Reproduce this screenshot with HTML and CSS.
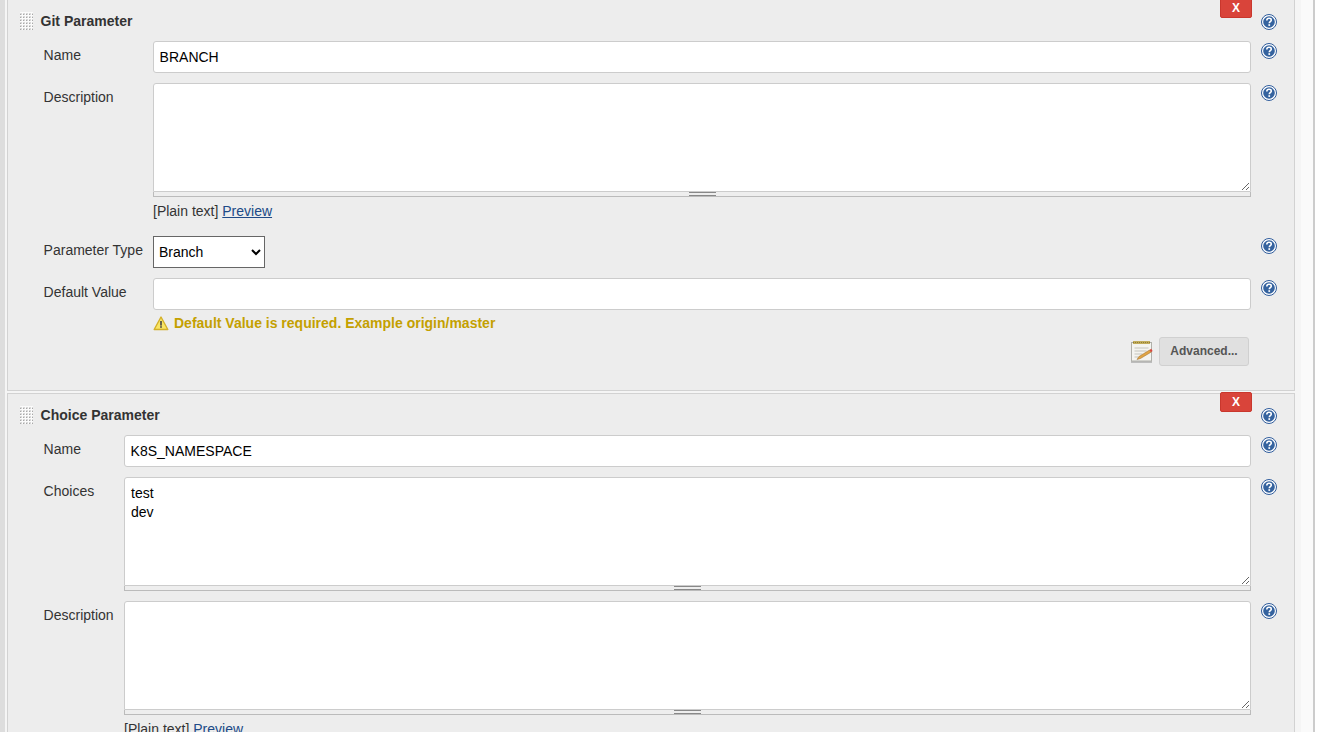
FILE: index.html
```html
<!DOCTYPE html>
<html lang="en">
<head>
    <meta charset="UTF-8">
    <title>Configure</title>
    <link rel="stylesheet" href="styles.css">
</head>

<body>
    <svg class="defs" width="0" height="0">
        <defs>
            <pattern id="dots" width="3" height="3" patternUnits="userSpaceOnUse">
                <rect width="2" height="2" y="1" fill="#d8d8d8"/>
                <rect width="1" height="1" y="2" fill="#a8a8a8"/>
            </pattern>
        </defs>
        <symbol id="help" viewBox="0 0 16 16">
            <circle cx="8" cy="8" r="7.5" fill="#fff" stroke="#2f5c9c"/>
            <circle cx="8" cy="8" r="5.8" fill="#35639f"/>
            <path d="M5.8 6.4c0-1.4 1-2.2 2.3-2.2s2.2.8 2.2 1.9c0 1.6-2 1.6-2 3.1" fill="none" stroke="#fff" stroke-width="1.6"/>
            <rect x="7.4" y="10.2" width="1.7" height="1.7" fill="#fff"/>
        </symbol>
        <symbol id="handle" viewBox="0 0 13 18">
            <rect width="13" height="18" fill="#fbfbfb"/>
            <rect width="13" height="18" fill="url(#dots)"/>
        </symbol>
    </svg>

    <div class="page">
        <!-- Git Parameter -->
        <section class="block block-git">
            <button class="delete" type="button">X</button>
            <div class="row title-row">
                <h3 class="title"><svg class="handle"><use href="#handle"/></svg>Git Parameter</h3>
                <svg class="help"><use href="#help"/></svg>
            </div>
            <div class="row">
                <label class="label">Name</label>
                <input class="text" type="text" value="BRANCH">
                <svg class="help"><use href="#help"/></svg>
            </div>
            <div class="row">
                <label class="label">Description</label>
                <div class="area-wrap">
                    <textarea class="area"></textarea>
                    <div class="grippie"><span></span></div>
                    <div class="plain">[Plain text] <a href="#">Preview</a></div>
                </div>
                <svg class="help"><use href="#help"/></svg>
            </div>
            <div class="row">
                <label class="label">Parameter Type</label>
                <select class="select"><option>Branch</option></select>
                <svg class="help"><use href="#help"/></svg>
            </div>
            <div class="row">
                <label class="label">Default Value</label>
                <div>
                    <input class="text" type="text">
                    <div class="warning">
                        <svg class="warn-icon" viewBox="0 0 16 16">
                            <path d="M8 2 14.8 14.5H1.2Z" fill="#f9e565" stroke="#d3b02a" stroke-width="1.4" stroke-linejoin="round"/>
                            <rect x="7.2" y="6" width="1.6" height="4.6" fill="#444"/>
                            <rect x="7.2" y="11.2" width="1.6" height="1.6" fill="#444"/>
                        </svg>
                        Default Value is required. Example origin/master
                    </div>
                </div>
                <svg class="help"><use href="#help"/></svg>
            </div>
            <div class="advanced">
                <svg class="notepad" viewBox="0 0 24 24">
                    <rect x="1" y="20" width="21" height="3" fill="#bdbdbd"/>
                    <rect x="1.5" y="2.5" width="20" height="18.5" fill="#f4f4f0" stroke="#b0b0aa"/>
                    <rect x="3" y="1" width="17" height="3" fill="#c2ad5c"/>
                    <path d="M3 2.5h17" stroke="#8f7d35" stroke-dasharray="1 1"/>
                    <path d="M4.5 8h14M4.5 11h12M4.5 14h8M4.5 17h4" stroke="#c4c4bc"/>
                    <path d="M7 19.5 9 16.5 19.5 10l1.5 2.2L10.5 18.5Z" fill="#e0a545" stroke="#9c6a26" stroke-width=".5"/>
                    <path d="M19.5 10l1.5 2.2 1.6-1.1-1.4-2.3Z" fill="#d9483b"/>
                </svg>
                <button class="adv-btn" type="button">Advanced...</button>
            </div>
        </section>

        <!-- Choice Parameter -->
        <section class="block block-choice">
            <button class="delete" type="button">X</button>
            <div class="row title-row">
                <h3 class="title"><svg class="handle"><use href="#handle"/></svg>Choice Parameter</h3>
                <svg class="help"><use href="#help"/></svg>
            </div>
            <div class="row">
                <label class="label">Name</label>
                <input class="text" type="text" value="K8S_NAMESPACE">
                <svg class="help"><use href="#help"/></svg>
            </div>
            <div class="row">
                <label class="label">Choices</label>
                <div class="area-wrap">
                    <textarea class="area">test
dev</textarea>
                    <div class="grippie"><span></span></div>
                </div>
                <svg class="help"><use href="#help"/></svg>
            </div>
            <div class="row">
                <label class="label">Description</label>
                <div class="area-wrap">
                    <textarea class="area"></textarea>
                    <div class="grippie"><span></span></div>
                    <div class="plain">[Plain text] <a href="#">Preview</a></div>
                </div>
                <svg class="help"><use href="#help"/></svg>
            </div>
        </section>
    </div>
</body>
</html>
```

FILE: styles.css
```css
/* page frame */
* {
    box-sizing: border-box;
}
html, body {
    margin: 0;
    height: 732px;
    overflow: hidden;
}
body {
    background: #fff;
    font-family: "Liberation Sans", Arial, sans-serif;
    font-size: 14px;
    color: #333;
}
.defs {
    position: absolute;
}
.page {
    width: 1315px;
    margin-top: -1px;
    padding-left: 2px;
    border-left: 5px solid #ddd;
    border-right: 2px solid #ccc;
    background: linear-gradient(to right, #f5f5f5 1296px, #fafafa 1296px);
}

/* parameter blocks */
.block {
    position: relative;
    width: 1288px;
    background: #ededed;
    border: 1px solid #d2d2d2;
    padding: 0 0 0 12px;
    margin-bottom: 2px;
}
.block-git {
    --label: 133px;
    height: 392px;
}
.block-choice {
    --label: 104px;
    height: 400px;
}
.delete {
    position: absolute;
    top: -2px;
    right: 42px;
    width: 32px;
    height: 20px;
    background: #d9443a;
    color: #fff;
    border: 1px solid #c9372d;
    border-radius: 2px;
    font: bold 12px "Liberation Sans", Arial, sans-serif;
    padding: 0;
}
.row {
    display: grid;
    grid-template-columns: var(--label) 1fr 43px;
    margin-bottom: 10px;
    align-items: start;
}
.title-row {
    grid-template-columns: 1fr 43px;
    height: 41px;
    margin-bottom: 0;
    padding-top: 14px;
}
.title {
    display: flex;
    align-items: center;
    margin: -2px 0 0;
    font-size: 14px;
    line-height: 16px;
    font-weight: bold;
}
.handle {
    width: 13px;
    height: 18px;
    margin-right: 7.6px;
}
.label {
    padding: 6px 0 0 23.6px;
    line-height: 16px;
    white-space: nowrap;
}
.help {
    width: 16px;
    height: 16px;
    margin: 2px 0 0 10px;
}
.title-row .help {
    margin-top: 0;
}

/* form fields */
.text {
    display: block;
    width: 100%;
    height: 32px;
    border: 1px solid #ccc;
    border-radius: 3px;
    background: #fff;
    padding: 0 5.6px;
    font: 14px "Liberation Sans", Arial, sans-serif;
    color: #000;
}
.area {
    display: block;
    width: 100%;
    height: 109px;
    border: 1px solid #ccc;
    border-radius: 3px 3px 0 0;
    padding: 6px 6px;
    font: 14px/19px "Liberation Sans", Arial, sans-serif;
    color: #000;
    background: #fff;
}
.grippie {
    height: 5px;
    border: 1px solid #bbb;
    border-top: 0;
    background: #eee;
    display: flex;
    justify-content: center;
}
.grippie span {
    display: block;
    width: 27px;
    height: 4px;
    border-top: 1px solid #888;
    border-bottom: 1px solid #888;
}
.plain {
    margin: 6px 0 7px;
    line-height: 16px;
    color: #333;
}
.plain a {
    color: #204a87;
}
.select {
    width: 112px;
    height: 32px;
    border: 1px solid #666;
    background: #fff;
    font: 14px "Liberation Sans", Arial, sans-serif;
    color: #000;
    padding-left: 1px;
}
.warning {
    display: flex;
    align-items: center;
    gap: 5px;
    margin-top: 5px;
    color: #c4a000;
    font-weight: bold;
    line-height: 16px;
}
.warn-icon {
    width: 16px;
    height: 16px;
}
.advanced {
    display: flex;
    justify-content: flex-end;
    align-items: center;
    gap: 5px;
    margin: -4px 45px 0 0;
}
.notepad {
    width: 24px;
    height: 24px;
}
.adv-btn {
    width: 90px;
    height: 29px;
    background: #e0e0e0;
    border: 1px solid #d0d0d0;
    border-radius: 3px;
    font: bold 12px "Liberation Sans", Arial, sans-serif;
    color: #555;
    padding: 0 0 2px;
}
```
